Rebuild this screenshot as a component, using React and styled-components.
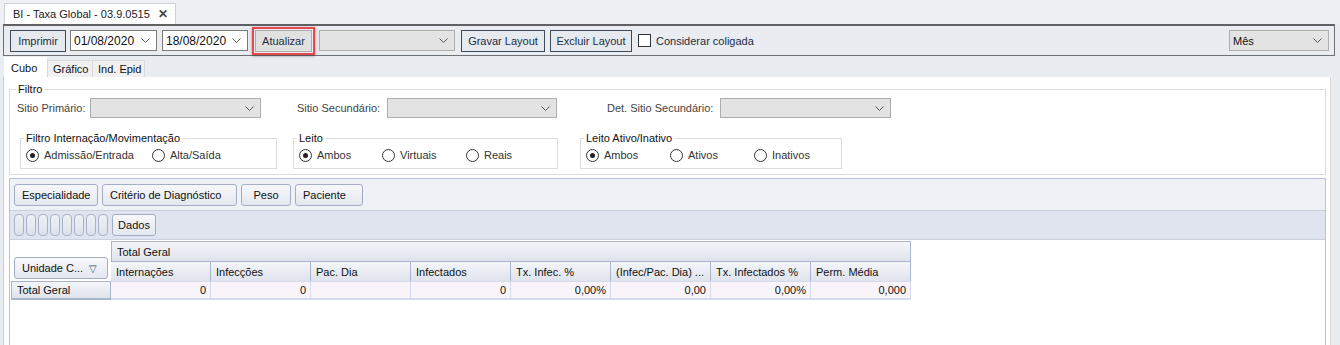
import React from 'react';
import styled, { createGlobalStyle } from 'styled-components';

const GlobalStyle = createGlobalStyle`
  html, body {
    margin: 0;
    padding: 0;
    background: #eef0f3;
    font-family: "Liberation Sans", Arial, sans-serif;
    font-size: 11px;
    color: #1b1b1b;
    white-space: nowrap;
  }
`;

const Page = styled.div`
  width: 1340px;
  height: 345px;
  overflow: hidden;
  display: flex;
  flex-direction: column;
  background: #e9ecf1;
`;

const DocStrip = styled.div`
  height: 24px;
  display: flex;
  align-items: flex-end;
  padding-left: 4px;
  background: #eef0f3;
`;

const DocTab = styled.div`
  height: 21px;
  width: 172px;
  box-sizing: border-box;
  background: #fff;
  border: 1px solid #cfd3d8;
  border-bottom: none;
  display: flex;
  align-items: center;
  justify-content: space-between;
  padding: 0 7px 0 8px;
  font-size: 11px;
  color: #222;
`;

const Close = styled.span`
  font-weight: bold;
  font-size: 12px;
  color: #444;
`;

const Toolbar = styled.div`
  margin: 0 5px 0 3px;
  height: 32px;
  box-sizing: border-box;
  border: 1px solid #6d6f73;
  border-top: 2px solid #5f6165;
  display: flex;
  align-items: center;
  gap: 4px;
  padding: 0 5px 0 6px;
  background: #e9ecf1;
`;

const Button = styled.button`
  height: 22px;
  width: ${p => p.$w}px;
  box-sizing: border-box;
  border: 1px solid ${p => (p.$soft ? '#adadad' : '#3e4a57')};
  background: ${p => (p.$soft ? '#e1e1e1' : '#e6e9ee')};
  font-family: inherit;
  font-size: 11px;
  color: #1c2f45;
  padding: 0;
  margin-left: ${p => p.$ml || 0}px;
`;

const Highlight = styled.div`
  border: 2px solid #e8474c;
  padding: 1px;
  box-shadow: 0 1px 3px rgba(0, 0, 0, 0.35);
  display: flex;
`;

const Combo = styled.div`
  height: ${p => p.$h || 21}px;
  width: ${p => p.$w}px;
  box-sizing: border-box;
  border: 1px solid ${p => (p.$white ? '#7a7a7a' : '#adadad')};
  background: ${p => (p.$white ? '#fff' : '#e3e3e3')};
  display: flex;
  align-items: center;
  justify-content: space-between;
  padding: 0 6px 0 3px;
  font-size: ${p => (p.$big ? 12 : 11)}px;
  color: #111;
  margin-left: ${p => p.$ml || 0}px;
`;

const Chevron = () => (
  <svg width="9" height="5" viewBox="0 0 9 5">
    <polyline points="0.5,0.5 4.5,4.5 8.5,0.5" fill="none" stroke="#555" strokeWidth="1" />
  </svg>
);

const CheckBox = styled.span`
  width: 13px;
  height: 13px;
  box-sizing: border-box;
  border: 1px solid #333;
  background: #fff;
  margin-left: 2px;
`;

const CheckLabel = styled.span`
  font-size: 11px;
  color: #1c2f45;
  margin-left: 1px;
`;

const Spacer = styled.div`
  flex: 1;
`;

const TabRow = styled.div`
  display: flex;
  align-items: flex-end;
  height: 21px;
  padding-left: 4px;
`;

const Tab = styled.div`
  height: ${p => (p.$active ? 20 : 17)}px;
  box-sizing: border-box;
  padding: 0 ${p => (p.$active ? 6 : 5)}px;
  width: ${p => p.$w}px;
  display: flex;
  align-items: center;
  background: ${p => (p.$active ? '#fff' : '#f0f0f0')};
  border: 1px solid ${p => (p.$active ? '#fff' : '#d9d9d9')};
  border-bottom: none;
  font-size: 11px;
  color: #111;
  margin-right: ${p => (p.$active ? 0 : -1)}px;
`;

const Panel = styled.div`
  flex: 1;
  margin: 0 9px 0 3px;
  background: #fff;
  border-left: 1px solid #c6c9ce;
  border-right: 1px solid #d9d9d9;
  padding: 6px 4px 0 5px;
  display: flex;
  flex-direction: column;
`;

const GroupBox = styled.fieldset`
  margin: 0;
  padding: ${p => p.$pad || '0'};
  border: 1px solid #dcdcdc;
  min-width: 0;
  width: ${p => (p.$w ? `${p.$w}px` : 'auto')};
  box-sizing: border-box;
  font-size: 11px;
  color: #222;
  legend {
    padding: 0 2px;
    margin-left: 3px;
    font-size: 11px;
    color: #111;
  }
`;

const FilterRow = styled.div`
  display: flex;
  align-items: center;
  height: 20px;
  margin-top: 3px;
  padding-left: 4px;
`;

const Label = styled.span`
  color: #444;
  width: ${p => p.$w}px;
  margin-left: ${p => p.$ml || 0}px;
`;

const GroupRow = styled.div`
  display: flex;
  margin-top: 14px;
  padding-left: 7px;
  gap: 16px;
  padding-bottom: 5px;
`;

const RadioLine = styled.div`
  display: flex;
  align-items: center;
  height: 18px;
  padding: 2px 0 4px 5px;
`;

const RadioItem = styled.label`
  display: flex;
  align-items: center;
  gap: 5px;
  width: ${p => p.$w}px;
  color: #333;
`;

const RadioCircle = styled.span`
  width: 11px;
  height: 11px;
  border: 1px solid #333;
  border-radius: 50%;
  display: flex;
  align-items: center;
  justify-content: center;
  &::after {
    content: '';
    width: 5px;
    height: 5px;
    border-radius: 50%;
    background: ${p => (p.$on ? '#222' : 'transparent')};
  }
`;

const Radio = ({ on, w, children }) => (
  <RadioItem $w={w}>
    <RadioCircle $on={on} />
    {children}
  </RadioItem>
);

const Pivot = styled.div`
  flex: 1;
  margin-top: 3px;
  border: 1px solid #b8c2d6;
  border-bottom: none;
  display: flex;
  flex-direction: column;
  font-size: 11px;
  color: #111;
`;

const PivotBand = styled.div`
  display: flex;
  align-items: center;
  gap: 4px;
  padding: 0 4px;
  height: ${p => p.$h}px;
  background: ${p => p.$bg};
  border-bottom: 1px solid #c9d0de;
`;

const FieldButton = styled.div`
  height: 22px;
  width: ${p => p.$w}px;
  box-sizing: border-box;
  border: 1px solid #a3aec4;
  border-radius: 3px;
  background: linear-gradient(#f7f8fb, #e3e7ef);
  display: flex;
  align-items: center;
  justify-content: ${p => (p.$center ? 'center' : 'flex-start')};
  padding-left: ${p => (p.$center ? 0 : 7)}px;
  font-size: 11px;
  color: #111;
`;

const Slots = styled.span`
  display: flex;
  gap: 2px;
  width: 94px;
`;

const Slot = styled.span`
  width: 10px;
  height: 22px;
  box-sizing: border-box;
  border: 1px solid #a9b3c7;
  border-radius: 4px;
  background: linear-gradient(#eef1f6, #dde2eb);
`;

const Grid = styled.div`
  display: grid;
  grid-template-columns: 100px repeat(8, 100px);
  grid-template-rows: 20px 20px 19px;
  margin: 1px 0 0 1px;
`;

const Corner = styled.div`
  grid-row: 1 / span 2;
  display: flex;
  align-items: flex-end;
  padding: 0 0 2px 3px;
`;

const HeadCell = styled.div`
  grid-column: ${p => p.$span || 'auto'};
  box-sizing: border-box;
  border: 1px solid #aab5cb;
  border-width: ${p => (p.$top ? '1px 1px 0 1px' : '1px 1px 0 0')};
  background: linear-gradient(#f3f5f9, #dfe3ec);
  padding-left: 5px;
  display: flex;
  align-items: center;
  overflow: hidden;
`;

const RowHead = styled.div`
  box-sizing: border-box;
  border: 1px solid #aab5cb;
  border-bottom: 2px solid #aab5cb;
  background: linear-gradient(#f3f5f9, #dfe3ec);
  padding-left: 5px;
  display: flex;
  align-items: center;
`;

const DataCell = styled.div`
  box-sizing: border-box;
  border-right: 1px solid #d6daee;
  border-bottom: 2px solid #d6daee;
  border-top: 1px solid #d6daee;
  background: #f8f4f9;
  padding-right: 4px;
  display: flex;
  align-items: center;
  justify-content: flex-end;
`;

const FilterDown = styled.span`
  margin-left: 6px;
  font-size: 10px;
  color: #3a4a6a;
`;

const columns = [
  'Internações',
  'Infecções',
  'Pac. Dia',
  'Infectados',
  'Tx. Infec. %',
  '(Infec/Pac. Dia) ...',
  'Tx. Infectados %',
  'Perm. Média',
];

const totals = ['0', '0', '', '0', '0,00%', '0,00', '0,00%', '0,000'];

const App = () => (
  <>
    <GlobalStyle />
    <Page>
      <DocStrip>
        <DocTab>
          BI - Taxa Global - 03.9.0515
          <Close>✕</Close>
        </DocTab>
      </DocStrip>

      <Toolbar>
        <Button $w={56}>Imprimir</Button>
        <Combo $w={87} $white $big>
          01/08/2020 <Chevron />
        </Combo>
        <Combo $w={86} $white $big $ml={1}>
          18/08/2020 <Chevron />
        </Combo>
        <Highlight>
          <Button $w={57} $soft>
            Atualizar
          </Button>
        </Highlight>
        <Combo $w={136}>
          <span />
          <Chevron />
        </Combo>
        <Button $w={84} $ml={2}>Gravar Layout</Button>
        <Button $w={82} $ml={1}>Excluir Layout</Button>
        <CheckBox />
        <CheckLabel>Considerar coligada</CheckLabel>
        <Spacer />
        <Combo $w={100}>
          Mês <Chevron />
        </Combo>
      </Toolbar>

      <TabRow>
        <Tab $active $w={43}>Cubo</Tab>
        <Tab $w={46}>Gráfico</Tab>
        <Tab $w={53}>Ind. Epid</Tab>
      </TabRow>

      <Panel>
        <GroupBox $pad="0 0 0 3px">
          <legend>Filtro</legend>
          <FilterRow>
            <Label $w={73}>Sitio Primário:</Label>
            <Combo $w={171} $h={20}>
              <span />
              <Chevron />
            </Combo>
            <Label $w={90} $ml={36}>Sitio Secundário:</Label>
            <Combo $w={170} $h={20}>
              <span />
              <Chevron />
            </Combo>
            <Label $w={113} $ml={50}>Det. Sitio Secundário:</Label>
            <Combo $w={171} $h={20}>
              <span />
              <Chevron />
            </Combo>
          </FilterRow>
          <GroupRow>
            <GroupBox $w={257}>
              <legend>Filtro Internação/Movimentação</legend>
              <RadioLine>
                <Radio on w={126}>Admissão/Entrada</Radio>
                <Radio w={100}>Alta/Saída</Radio>
              </RadioLine>
            </GroupBox>
            <GroupBox $w={265}>
              <legend>Leito</legend>
              <RadioLine>
                <Radio on w={83}>Ambos</Radio>
                <Radio w={84}>Virtuais</Radio>
                <Radio w={70}>Reais</Radio>
              </RadioLine>
            </GroupBox>
            <GroupBox $w={262} style={{ marginLeft: 6 }}>
              <legend>Leito Ativo/Inativo</legend>
              <RadioLine>
                <Radio on w={84}>Ambos</Radio>
                <Radio w={84}>Ativos</Radio>
                <Radio w={80}>Inativos</Radio>
              </RadioLine>
            </GroupBox>
          </GroupRow>
        </GroupBox>

        <Pivot>
          <PivotBand $h={31} $bg="#eef1f6">
            <FieldButton $w={84}>Especialidade</FieldButton>
            <FieldButton $w={135}>Critério de Diagnóstico</FieldButton>
            <FieldButton $w={50} $center>Peso</FieldButton>
            <FieldButton $w={68}>Paciente</FieldButton>
          </PivotBand>
          <PivotBand $h={28} $bg="#dfe4ee">
            <Slots>
              {Array.from({ length: 8 }).map((_, i) => (
                <Slot key={i} />
              ))}
            </Slots>
            <FieldButton $w={44} $center>Dados</FieldButton>
          </PivotBand>
          <Grid>
            <Corner>
              <FieldButton $w={94}>
                Unidade C...<FilterDown>▽</FilterDown>
              </FieldButton>
            </Corner>
            <HeadCell $span="2 / span 8" $top>Total Geral</HeadCell>
            {columns.map(c => (
              <HeadCell key={c}>{c}</HeadCell>
            ))}
            <RowHead>Total Geral</RowHead>
            {totals.map((t, i) => (
              <DataCell key={i}>{t}</DataCell>
            ))}
          </Grid>
        </Pivot>
      </Panel>
    </Page>
  </>
);

export default App;
